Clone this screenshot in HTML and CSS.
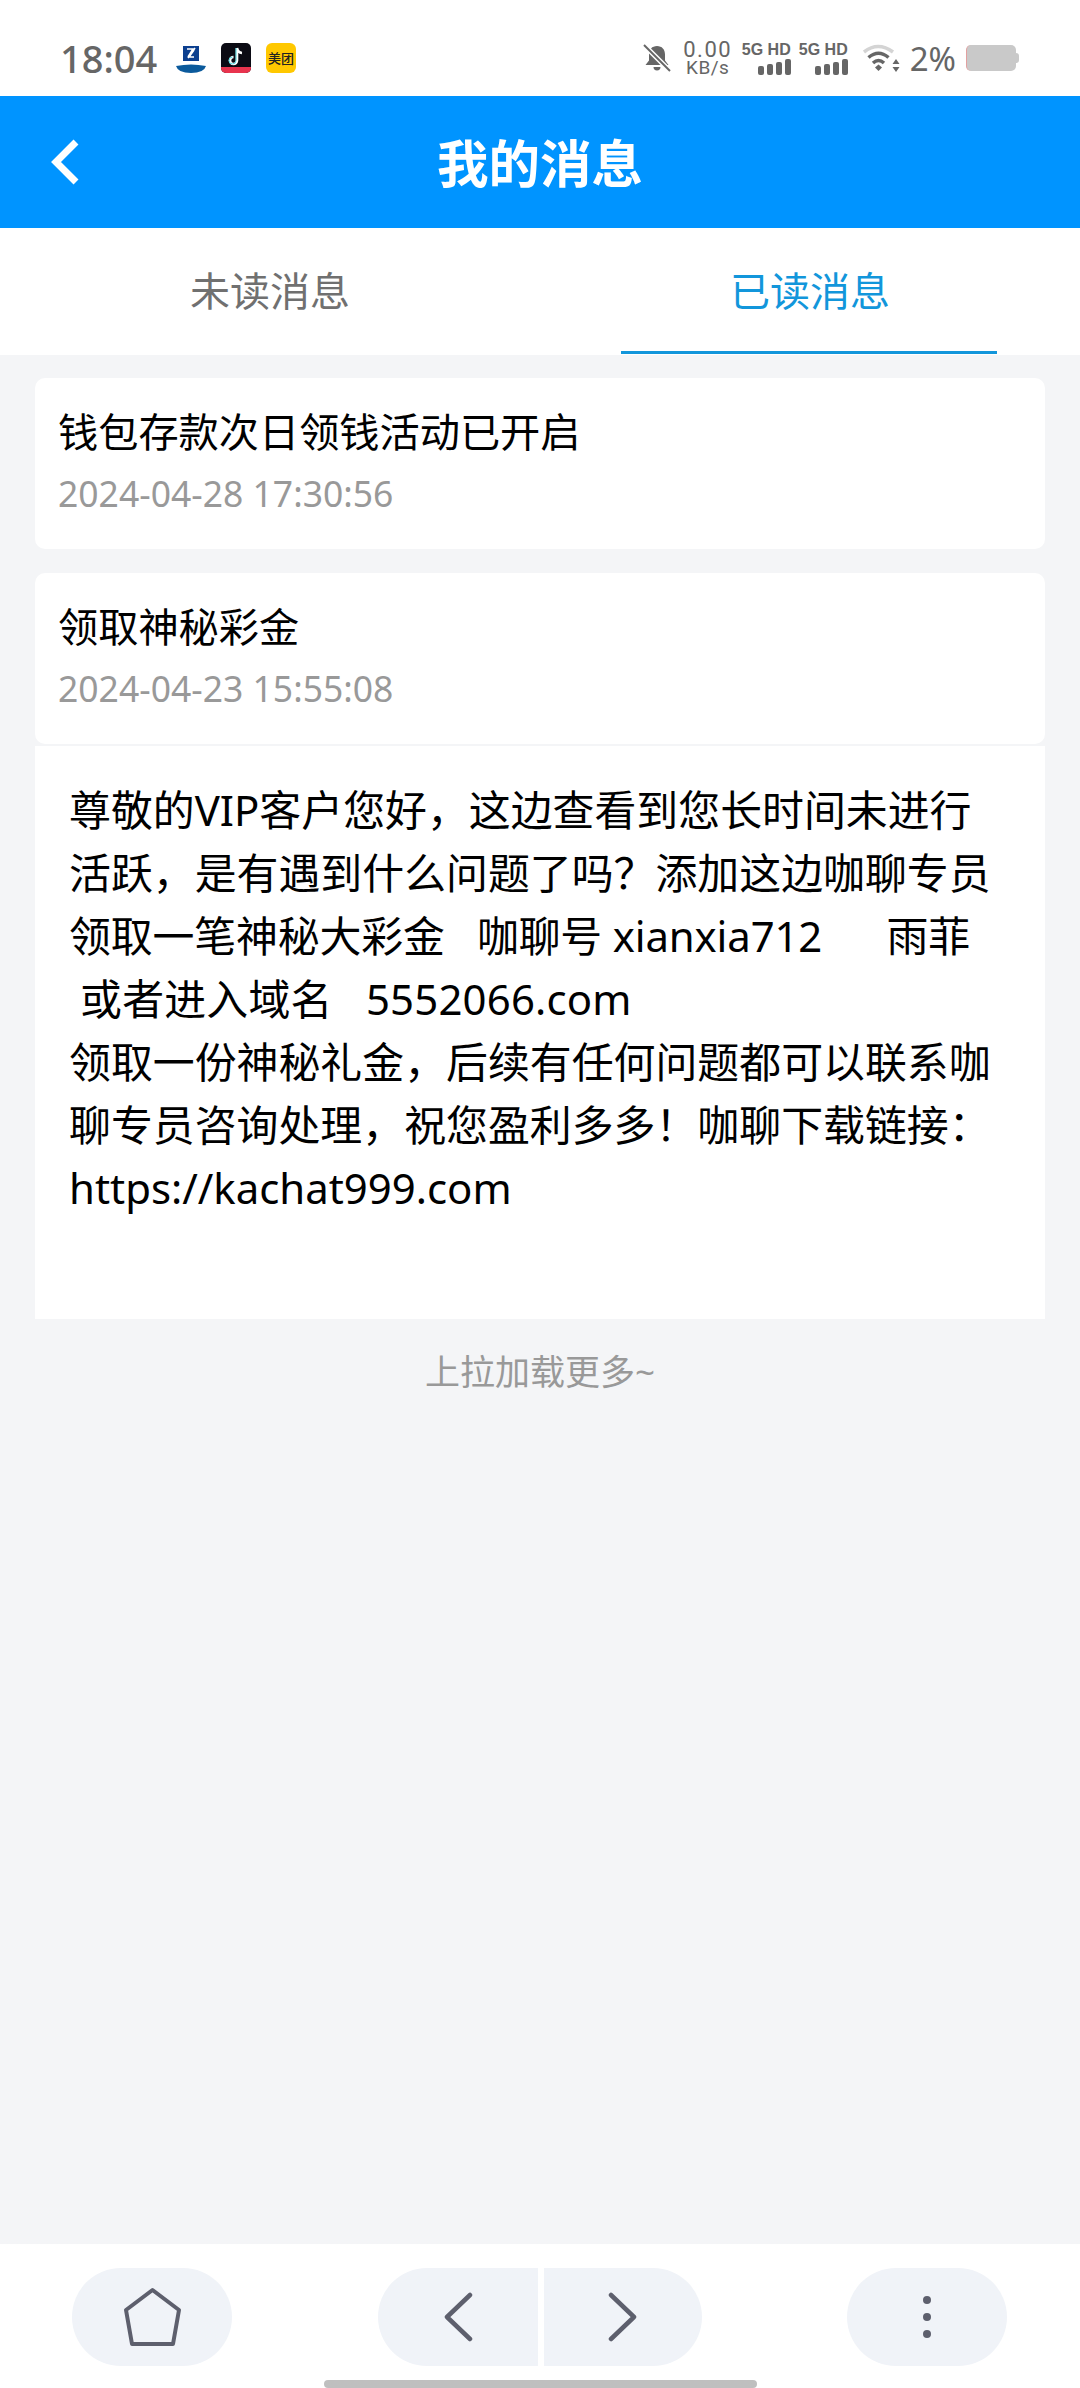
FILE: index.html
```html
<!DOCTYPE html>
<html lang="zh-CN">
<head>
    <meta charset="UTF-8">
    <meta name="viewport" content="width=device-width, initial-scale=1.0">
    <title>我的消息</title>
    <link rel="stylesheet" href="styles.css">
</head>
<body>
    <div class="status-bar">
        <span class="clock">18:04</span>
        <div class="app-icons">
            <svg class="app-icon" viewBox="0 0 30 30">
                <rect x="7" y="3" width="16" height="15" fill="#0b3f8f"/>
                <path d="M12 15 L19 5 M11 6h6l-5 8M18 14h-5l5-7" stroke="#fff" stroke-width="1.6" fill="none"/>
                <path d="M0 23 Q15 20 30 23 Q28 30 15 30 Q2 30 0 23Z" fill="#0b5a9c"/>
            </svg>
            <svg class="app-icon" viewBox="0 0 30 30">
                <rect width="30" height="30" rx="5" fill="#0b0b14"/>
                <path d="M0 24h30v1a5 5 0 0 1-5 5H5a5 5 0 0 1-5-5z" fill="#e8344e"/>
                <path d="M16 5v12.500a3.500 3.500 0 1 1-3.500-3.500M16 5c.5 3 2.500 4.800 5 5" stroke="#fff" stroke-width="2.600" fill="none"/>
                <path d="M15 5v12.500a3.500 3.500 0 1 1-3.500-3.500" stroke="#4fd8e0" stroke-width="1" fill="none"/>
            </svg>
            <div class="meituan">美团</div>
        </div>
        <div class="status-right">
            <svg class="bell" viewBox="0 0 28 28">
                <path d="M14 2c-5 0-8 3.500-8 8.500v6L2.500 21h23L22 16.500v-6C22 5.500 19 2 14 2z M10.500 23a3.500 3.500 0 0 0 7 0z" fill="#666"/>
                <path d="M1 1 L27 27" stroke="#fff" stroke-width="5"/>
                <path d="M1 1 L27 27" stroke="#666" stroke-width="2"/>
            </svg>
            <div class="speed"><span>0.00</span><span class="speed-unit">KB/s</span></div>
            <div class="signal">
                <span class="signal-label">5G HD</span>
                <div class="bars"><i class="b1"></i><i class="b2"></i><i class="b3"></i><i class="b4"></i></div>
            </div>
            <div class="signal">
                <span class="signal-label">5G HD</span>
                <div class="bars"><i class="b1"></i><i class="b2"></i><i class="b3"></i><i class="b4"></i></div>
            </div>
            <svg class="wifi" viewBox="0 0 37 28">
                <path d="M1 8 Q15 -3 30 8" stroke="#d4d4d4" stroke-width="3.500" fill="none"/>
                <path d="M5.500 13.500 Q15.500 5 25.500 13.500" stroke="#666" stroke-width="3.500" fill="none"/>
                <path d="M10 19 Q15.500 14 21 19" stroke="#666" stroke-width="3.500" fill="none"/>
                <path d="M12 23.500 L15.500 20.500 L19 23.500 L15.500 27Z" fill="#666"/>
                <path d="M33 15 L36.500 20 H29.500Z M33 28 L29.500 23 H36.500Z" fill="#666"/>
            </svg>
            <span class="battery-text">2%</span>
            <div class="battery"><div class="battery-body"></div><div class="battery-nub"></div></div>
        </div>
    </div>

    <div class="header">
        <svg class="back-arrow" viewBox="0 0 30 46">
            <path d="M26 3 L6 23 L26 43" stroke="#fff" stroke-width="7" fill="none"/>
        </svg>
        <h1>我的消息</h1>
    </div>

    <div class="tabs">
        <div class="tab">未读消息</div>
        <div class="tab active">已读消息</div>
    </div>

    <div class="msg-list">
        <div class="msg-card">
            <div class="msg-title">钱包存款次日领钱活动已开启</div>
            <div class="msg-date">2024-04-28 17:30:56</div>
        </div>
        <div class="msg-card open">
            <div class="msg-title">领取神秘彩金</div>
            <div class="msg-date">2024-04-23 15:55:08</div>
        </div>
        <div class="msg-body">
            <p>尊敬的VIP客户您好，这边查看到您长时间未进行活跃，是有遇到什么问题了吗？添加这边咖聊专员</p>
            <p class="id-line">领取一笔神秘大彩金&nbsp;&nbsp; 咖聊号 xianxia712&nbsp; &nbsp; &nbsp; 雨菲</p>
            <p class="domain-line">&nbsp;或者进入域名&nbsp;&nbsp; 5552066.com</p>
            <p>领取一份神秘礼金，后续有任何问题都可以联系咖聊专员咨询处理，祝您盈利多多！咖聊下载链接：https://kachat999.com</p>
        </div>
    </div>

    <div class="load-more">上拉加载更多~</div>

    <div class="bottom-bar">
        <div class="nav-row">
            <button class="nav-btn">
                <svg width="59" height="60" viewBox="0 0 59 60">
                    <path d="M29.500 3 L56 23 L50 57 H9 L3 23 Z" stroke="#5d5f6d" stroke-width="4" fill="none" stroke-linejoin="round"/>
                </svg>
            </button>
            <div class="nav-pair">
                <button class="nav-btn left">
                    <svg width="30" height="50" viewBox="0 0 30 50">
                        <path d="M27 3 L4 25 L27 47" stroke="#5d5f6d" stroke-width="4.500" fill="none" stroke-linecap="round" stroke-linejoin="round"/>
                    </svg>
                </button>
                <button class="nav-btn right">
                    <svg width="30" height="50" viewBox="0 0 30 50">
                        <path d="M3 3 L26 25 L3 47" stroke="#5d5f6d" stroke-width="4.500" fill="none" stroke-linecap="round" stroke-linejoin="round"/>
                    </svg>
                </button>
            </div>
            <button class="nav-btn">
                <svg width="10" height="44" viewBox="0 0 10 44">
                    <circle cx="5" cy="5" r="4" fill="#5d5f6d"/>
                    <circle cx="5" cy="22" r="4" fill="#5d5f6d"/>
                    <circle cx="5" cy="39" r="4" fill="#5d5f6d"/>
                </svg>
            </button>
        </div>
        <div class="home-indicator"></div>
    </div>
</body>
</html>
```

FILE: styles.css
```css
* {
    margin: 0;
    padding: 0;
    box-sizing: border-box;
}

html, body {
    height: 100%;
}

body {
    width: 1080px;
    height: 2388px;
    display: flex;
    flex-direction: column;
    overflow: hidden;
    background: #f4f5f7;
    font-family: "Noto Sans", "Noto Sans CJK SC", sans-serif;
}

.status-bar {
    height: 96px;
    background: #fff;
    display: flex;
    align-items: center;
    padding: 20px 61px 0 60px;
    color: #666;
}

.clock {
    font-size: 38px;
    font-weight: 500;
    width: 116px;
}

.app-icons {
    display: flex;
    gap: 15px;
}

.app-icon {
    width: 30px;
    height: 30px;
}

.meituan {
    width: 30px;
    height: 30px;
    border-radius: 6px;
    background: #ffc800;
    color: #222;
    font-size: 13px;
    line-height: 30px;
    text-align: center;
    font-weight: 500;
    font-family: "Noto Sans CJK SC", sans-serif;
}

.status-right {
    margin-left: auto;
    display: flex;
    align-items: center;
}

.bell {
    width: 28px;
    height: 28px;
    margin-right: 11px;
}

.speed {
    width: 52px;
    display: flex;
    flex-direction: column;
    align-items: center;
    font-family: "Roboto", sans-serif;
    font-size: 22px;
    line-height: 19px;
    letter-spacing: 1.5px;
    margin-right: 10px;
}

.speed-unit {
    font-size: 19px;
    letter-spacing: 0.5px;
    line-height: 17px;
}

.signal {
    width: 47px;
    margin-right: 10px;
    display: flex;
    flex-direction: column;
    align-items: flex-end;
}

.signal-label {
    font-family: "Liberation Sans", sans-serif;
    font-size: 16px;
    font-weight: 700;
    line-height: 15px;
    white-space: nowrap;
}

.bars {
    display: flex;
    align-items: flex-end;
    gap: 3px;
    height: 16px;
    margin-top: 2px;
}

.bars i {
    display: block;
    width: 6px;
    background: #666;
    border-radius: 2px;
}

.bars .b1 { height: 9px; }
.bars .b2 { height: 11px; }
.bars .b3 { height: 13px; }
.bars .b4 { height: 16px; }

.wifi {
    width: 37px;
    height: 28px;
    margin-left: 5px;
    margin-right: 10px;
}

.battery-text {
    font-size: 33px;
    margin-right: 10px;
    line-height: 1;
}

.battery {
    display: flex;
    align-items: center;
}

.battery-body {
    width: 50px;
    height: 26px;
    background: #c9c9c9;
    border-left: 1px solid #e2a0a0;
    border-radius: 5px;
}

.battery-nub {
    width: 3px;
    height: 10px;
    background: #c9c9c9;
    border-radius: 0 3px 3px 0;
}

.header {
    height: 132px;
    background: #0094ff;
    display: flex;
    align-items: center;
    justify-content: center;
    position: relative;
    padding-bottom: 4px;
}

.header h1 {
    color: #fff;
    font-size: 51.5px;
    font-weight: 700;
    font-family: "Noto Sans CJK SC", sans-serif;
}

.back-arrow {
    position: absolute;
    left: 50px;
    top: 43px;
    width: 30px;
    height: 46px;
}

.tabs {
    height: 127px;
    background: #fff;
    display: flex;
}

.tab {
    flex: 1;
    text-align: center;
    font-size: 40px;
    line-height: 122px;
    color: #707070;
    font-family: "Noto Sans CJK SC", sans-serif;
    position: relative;
}

.tab.active {
    color: #1296db;
}

.tab.active::after {
    content: "";
    position: absolute;
    left: 81px;
    right: 83px;
    bottom: 1px;
    height: 3px;
    background: #1296db;
}

.msg-list {
    padding: 23px 35px 0;
}

.msg-card {
    background: #fff;
    height: 171px;
    border-radius: 10px;
    padding: 22px 23px 0;
    margin-bottom: 24px;
}

.msg-card.open {
    margin-bottom: 2px;
}

.msg-title {
    font-size: 40.2px;
    line-height: 60px;
    color: #000;
    font-family: "Noto Sans CJK SC", sans-serif;
}

.msg-date {
    font-size: 35.5px;
    line-height: 50px;
    margin-top: 8px;
    color: #999;
}

.msg-body {
    background: #fff;
    height: 573px;
    padding: 32px 50px 0 34px;
    font-size: 41.9px;
    line-height: 63px;
    color: #000;
}

.id-line {
    letter-spacing: -0.15px;
}

.domain-line {
    letter-spacing: 0.2px;
}

.load-more {
    margin-top: 28px;
    text-align: center;
    font-size: 35px;
    line-height: 50px;
    color: #999;
}

.bottom-bar {
    margin-top: auto;
    height: 144px;
    background: #fff;
    padding-top: 24px;
}

.nav-row {
    height: 98px;
    display: flex;
    justify-content: space-between;
    padding: 0 73px 0 72px;
}

.nav-btn {
    width: 160px;
    height: 98px;
    border: none;
    border-radius: 49px;
    background: #f0f3f8;
    display: flex;
    align-items: center;
    justify-content: center;
}

.nav-pair {
    display: flex;
    gap: 6px;
}

.nav-btn.left {
    border-radius: 49px 0 0 49px;
}

.nav-btn.right {
    width: 158px;
    border-radius: 0 49px 49px 0;
}

.home-indicator {
    width: 433px;
    height: 8px;
    margin: 14px auto 0;
    background: #bfbfbf;
    border-radius: 4px;
}
```
